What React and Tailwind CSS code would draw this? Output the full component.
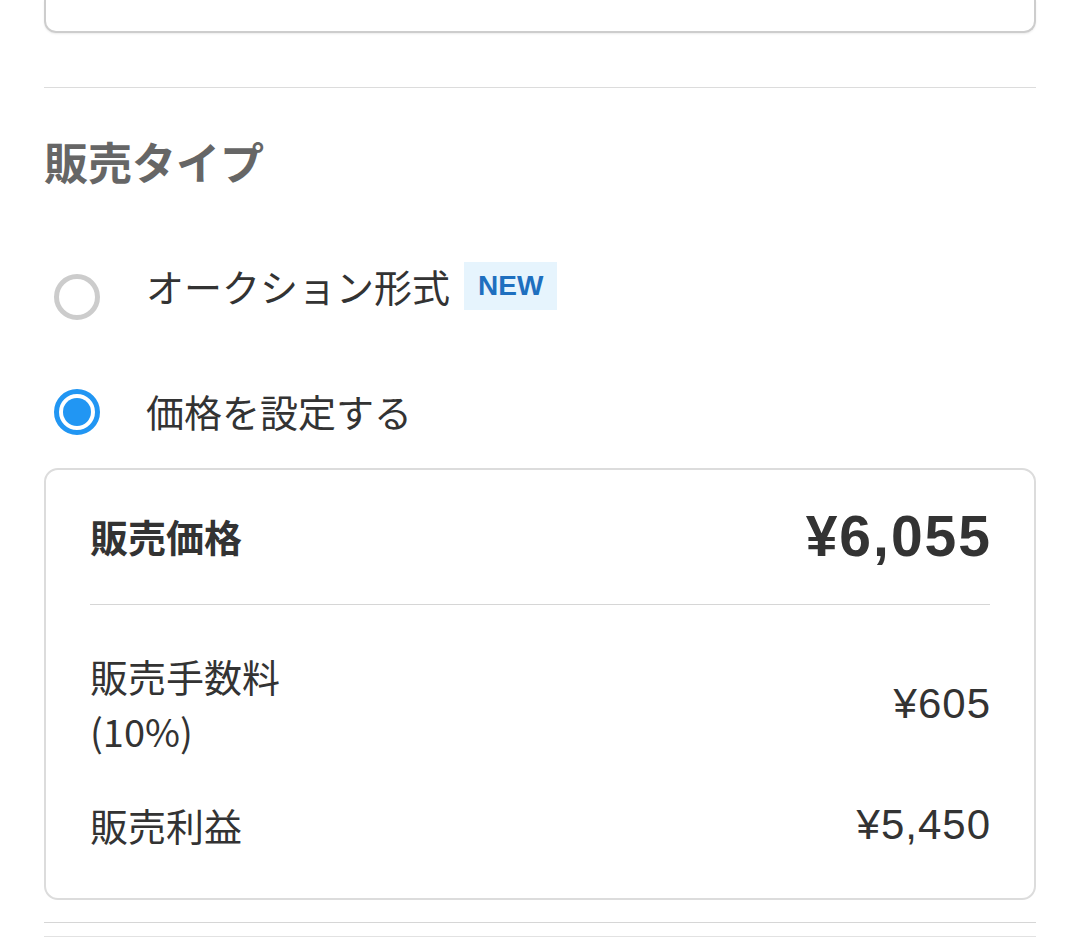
export default function App() {
  const jp = { fontFamily: '"Noto Sans CJK JP", "Noto Sans", sans-serif' };
  const num = { fontFamily: '"Liberation Sans", "Noto Sans CJK JP", sans-serif' };
  return (
    <div className="w-[1080px] h-[938px] overflow-hidden bg-white px-[44px] text-[#333]" style={jp}>
      {/* top card remnant */}
      <div className="h-[33px] border-2 border-t-0 border-[#cdcdcd] rounded-b-[12px] shadow-[0_1px_2px_rgba(0,0,0,0.08)]" />
      {/* divider */}
      <div className="mt-[54px] h-px bg-[#dcdcdc]" />
      {/* heading */}
      <h2 className="mt-[47px] text-[44px] leading-[52px] font-bold text-[#666]">販売タイプ</h2>

      {/* option 1 */}
      <div className="mt-[75px] flex items-start h-[48px]">
        <div className="ml-[10px] mt-[12px] w-[46px] h-[46px] rounded-full border-[5px] border-[#cccccc] shrink-0" />
        <div className="ml-[46px] text-[38px] leading-[48px]">オークション形式</div>
        <div className="ml-[14px] h-[48px] px-[14px] flex items-center bg-[#e6f4fd] text-[#1e6fbf] text-[28px] font-bold" style={num}>
          NEW
        </div>
      </div>

      {/* option 2 */}
      <div className="mt-[77px] flex items-start h-[48px]">
        <div className="ml-[10px] mt-[2px] w-[46px] h-[46px] rounded-full border-[5px] border-[#2196f3] shrink-0 flex items-center justify-center">
          <div className="w-[28px] h-[28px] rounded-full bg-[#2196f3]" />
        </div>
        <div className="ml-[46px] text-[38px] leading-[48px]">価格を設定する</div>
      </div>

      {/* price card */}
      <div className="mt-[33px] border-2 border-[#dcdcdc] rounded-[14px] px-[44px] pt-[34px] pb-[46px]">
        <div className="flex items-center justify-between h-[64px]">
          <div className="text-[38px] leading-[48px] font-bold">販売価格</div>
          <div className="text-[57px] leading-[64px] font-bold tracking-[2px] -mr-[2px]" style={num}>¥6,055</div>
        </div>
        <div className="mt-[36px] h-px bg-[#d6d6d6]" />
        <div className="mt-[43px] flex items-center justify-between">
          <div className="text-[38px] leading-[55px]">
            <div>販売手数料</div>
            <div>(10%)</div>
          </div>
          <div className="text-[42px] leading-[55px] tracking-[1px] -mr-[1px]" style={num}>¥605</div>
        </div>
        <div className="mt-[39px] flex items-center justify-between">
          <div className="text-[38px] leading-[55px]">販売利益</div>
          <div className="text-[42px] leading-[55px] tracking-[1px] -mr-[1px]" style={num}>¥5,450</div>
        </div>
      </div>

      <div className="mt-[22px] h-px bg-[#d6d6d6]" />
      <div className="mt-[13px] h-px bg-[#e2e2e2]" />
    </div>
  );
}
